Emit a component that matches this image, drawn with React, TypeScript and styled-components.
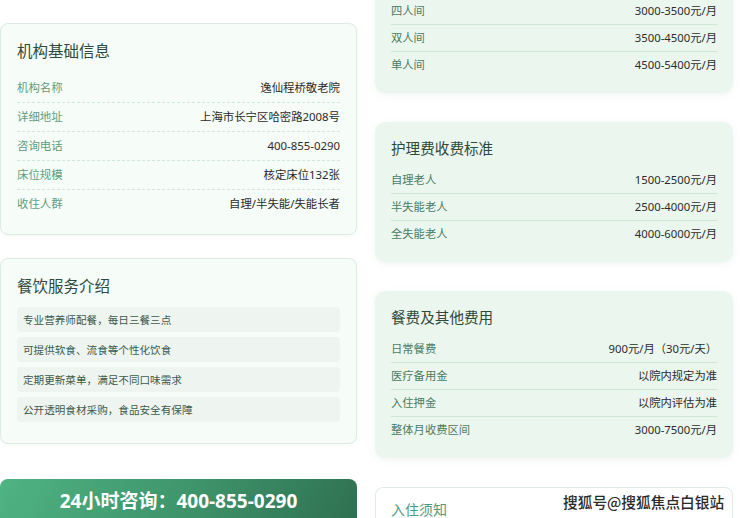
import React from "react";
import styled, { createGlobalStyle } from "styled-components";

const Global = createGlobalStyle`
  html, body { margin: 0; padding: 0; background: #ffffff; overflow: hidden; }
  body { font-family: "Noto Sans", "Noto Sans CJK SC", sans-serif; }
  * { box-sizing: border-box; }
`;

const Page = styled.div`
  position: relative;
  width: 740px;
  height: 518px;
  overflow: hidden;
`;

const Grid = styled.div`
  display: grid;
  grid-template-columns: 357px 358px;
  column-gap: 18px;
  padding-top: 23px;
  align-items: start;
`;

const LeftCol = styled.div`
  display: flex;
  flex-direction: column;
`;

const RightCol = styled.div`
  display: flex;
  flex-direction: column;
  gap: 29px;
  margin-top: -70px;
`;

const InfoCard = styled.section<{ $gapAfter: number; $padBottom: number }>`
  background: #f6fcf8;
  border: 1px solid #dcece3;
  border-radius: 8px;
  box-shadow: 0 1px 4px rgba(60, 110, 80, 0.06);
  padding: 16px 16px ${(p) => p.$padBottom}px 16px;
  margin-bottom: ${(p) => p.$gapAfter}px;
`;

const InfoTitle = styled.h3<{ $gap: number }>`
  margin: 0 0 ${(p) => p.$gap}px 0;
  font-size: 15.5px;
  line-height: 22px;
  font-weight: 400;
  color: #2e4a3d;
`;

const InfoRow = styled.div`
  display: flex;
  justify-content: space-between;
  align-items: center;
  padding: 6px 0;
  line-height: 16px;
  font-size: 11.4px;
  border-bottom: 1px dashed #d3e6da;
  &:last-child { border-bottom: none; }
`;

const InfoLabel = styled.span`
  color: #5f9c7e;
`;

const InfoValue = styled.span`
  color: #2b2b2b;
`;

const ServiceList = styled.div`
  display: flex;
  flex-direction: column;
  gap: 5px;
`;

const ServiceItem = styled.div`
  height: 25px;
  display: flex;
  align-items: center;
  padding: 0 6px;
  background: #eef5f1;
  border-radius: 4px;
  font-size: 10.6px;
  color: #3c5a4b;
`;

const Hotline = styled.div`
  border-radius: 8px;
  background: linear-gradient(120deg, #4fb383 0%, #3f956c 50%, #2e6f50 100%);
  color: #ffffff;
  text-align: center;
  font-weight: 700;
  font-size: 19px;
  line-height: 22px;
  padding: 11px 0 18px;
`;

const FeeCard = styled.section`
  background: #ebf6ef;
  border-radius: 10px;
  box-shadow: 0 2px 8px rgba(60, 110, 80, 0.07);
  padding: 16px 16px 15px 16px;
`;

const FeeTitle = styled.h3`
  margin: 0 0 8px 0;
  font-size: 14.6px;
  line-height: 21px;
  font-weight: 400;
  color: #2d4a3b;
`;

const FeeRow = styled.div`
  display: flex;
  justify-content: space-between;
  align-items: center;
  padding: 6px 0;
  line-height: 14px;
  font-size: 11.3px;
  border-bottom: 1px solid #cfe8d6;
  &:last-child { border-bottom: none; }
`;

const FeeLabel = styled.span`
  color: #4c7c63;
`;

const FeeValue = styled.span`
  color: #2b2b2b;
`;

const NoticeCard = styled.section`
  background: #ffffff;
  border: 1px solid #dcece3;
  border-radius: 8px;
  padding: 12px 15px 20px;
`;

const NoticeTitle = styled.h3`
  margin: 0;
  font-size: 14px;
  line-height: 20px;
  font-weight: 400;
  color: #4f9a7a;
`;

const Watermark = styled.div`
  position: absolute;
  left: 563px;
  top: 492px;
  font-family: "Noto Sans CJK SC", sans-serif;
  font-size: 14.7px;
  line-height: 20px;
  font-weight: 500;
  color: #2a2a2a;
  text-shadow: 0 0 2px #fff, 0 0 2px #fff, 1px 1px 0 #fff;
`;

type Pair = [string, string];

const basic: Pair[] = [
  ["机构名称", "逸仙程桥敬老院"],
  ["详细地址", "上海市长宁区哈密路2008号"],
  ["咨询电话", "400-855-0290"],
  ["床位规模", "核定床位132张"],
  ["收住人群", "自理/半失能/失能长者"],
];

const services = [
  "专业营养师配餐，每日三餐三点",
  "可提供软食、流食等个性化饮食",
  "定期更新菜单，满足不同口味需求",
  "公开透明食材采购，食品安全有保障",
];

const feeGroups: { title: string; rows: Pair[] }[] = [
  {
    title: "床位费收费标准",
    rows: [
      ["四人间", "3000-3500元/月"],
      ["双人间", "3500-4500元/月"],
      ["单人间", "4500-5400元/月"],
    ],
  },
  {
    title: "护理费收费标准",
    rows: [
      ["自理老人", "1500-2500元/月"],
      ["半失能老人", "2500-4000元/月"],
      ["全失能老人", "4000-6000元/月"],
    ],
  },
  {
    title: "餐费及其他费用",
    rows: [
      ["日常餐费", "900元/月（30元/天）"],
      ["医疗备用金", "以院内规定为准"],
      ["入住押金", "以院内评估为准"],
      ["整体月收费区间", "3000-7500元/月"],
    ],
  },
];

export default function App() {
  return (
    <Page>
      <Global />
      <Grid>
        <LeftCol>
          <InfoCard $gapAfter={23} $padBottom={16}>
            <InfoTitle $gap={12}>机构基础信息</InfoTitle>
            {basic.map(([k, v]) => (
              <InfoRow key={k}>
                <InfoLabel>{k}</InfoLabel>
                <InfoValue>{v}</InfoValue>
              </InfoRow>
            ))}
          </InfoCard>
          <InfoCard $gapAfter={35} $padBottom={21}>
            <InfoTitle $gap={10}>餐饮服务介绍</InfoTitle>
            <ServiceList>
              {services.map((s) => (
                <ServiceItem key={s}>{s}</ServiceItem>
              ))}
            </ServiceList>
          </InfoCard>
          <Hotline>24小时咨询：400-855-0290</Hotline>
        </LeftCol>
        <RightCol>
          {feeGroups.map((g) => (
            <FeeCard key={g.title}>
              <FeeTitle>{g.title}</FeeTitle>
              {g.rows.map(([k, v]) => (
                <FeeRow key={k}>
                  <FeeLabel>{k}</FeeLabel>
                  <FeeValue>{v}</FeeValue>
                </FeeRow>
              ))}
            </FeeCard>
          ))}
          <NoticeCard>
            <NoticeTitle>入住须知</NoticeTitle>
          </NoticeCard>
        </RightCol>
      </Grid>
      <Watermark>搜狐号@搜狐焦点白银站</Watermark>
    </Page>
  );
}
